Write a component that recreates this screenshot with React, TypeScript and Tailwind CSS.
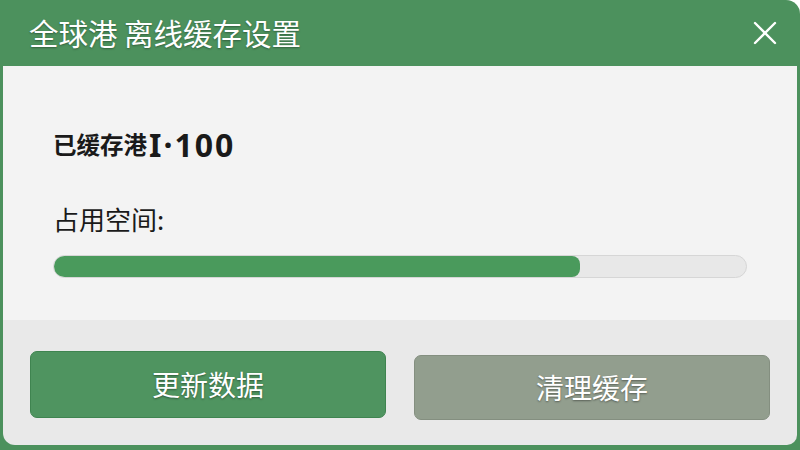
const font = '"Noto Sans CJK SC", "Noto Sans", sans-serif';

function CloseIcon() {
  return (
    <svg width="26" height="26" viewBox="0 0 26 26" fill="none" stroke="white" strokeWidth="2.4" strokeLinecap="round">
      <path d="M3 3 L23 23 M23 3 L3 23" />
    </svg>
  );
}

export default function App() {
  const used = 76;
  return (
    <div
      className="w-[800px] h-[450px] bg-[#4c915d] flex flex-col overflow-hidden rounded-tr-[14px]"
      style={{ fontFamily: font }}
    >
      <div className="h-[66px] flex items-center justify-between pl-[29px] pr-[22px] shrink-0">
        <h1 className="text-white text-[29.5px] leading-none [text-shadow:0_1px_2px_rgba(0,0,0,0.35)]">
          全球港 离线缓存设置
        </h1>
        <CloseIcon />
      </div>
      <div className="flex-1 mx-[3px] mb-[5px] flex flex-col rounded-bl-[12px] rounded-br-[10px] overflow-hidden">
        <div className="h-[254px] bg-[#f3f3f3] pl-[50px] pt-[62px]">
          <p className="flex items-center text-[#1a1a1a] text-[23.5px] leading-none font-semibold h-[34px]">
            已缓存港
            <span className="font-bold font-['Noto_Sans',sans-serif] text-[32px] tracking-[2px] ml-[2px]">I·100</span>
          </p>
          <p className="mt-[44px] text-[#1a1a1a] text-[26px] leading-none">占用空间:</p>
          <div className="mt-[23px] w-[694px] h-[23px] rounded-full bg-[#e8e8e8] border border-[#d6d6d6] overflow-hidden">
            <div className="h-full bg-[#4a9a5c] rounded-[8px]" style={{ width: `${used}%` }} />
          </div>
        </div>
        <div className="flex-1 bg-[#e9e9e9] flex items-center gap-[28px] px-[27px] pt-[3px]">
          <button className="flex-1 h-[67px] rounded-[7px] bg-[#4f9460] border border-[#3f8450] text-white text-[28px] [text-shadow:0_1px_2px_rgba(0,0,0,0.4)]">
            更新数据
          </button>
          <button className="flex-1 h-[65px] mt-[6px] rounded-[7px] bg-[#929e8e] border border-[#848f80] text-white text-[28px] [text-shadow:0_1px_2px_rgba(0,0,0,0.4)]">
            清理缓存
          </button>
        </div>
      </div>
    </div>
  );
}
